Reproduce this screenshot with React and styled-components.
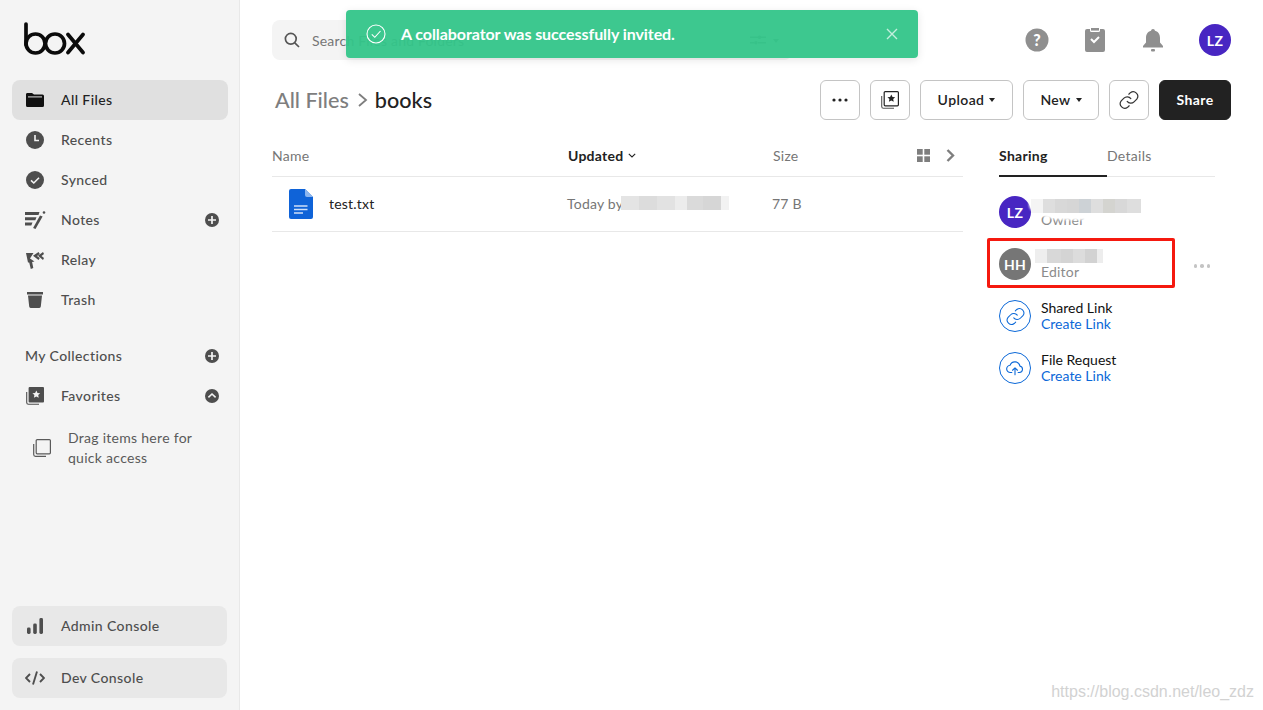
import React from "react";
import styled, { createGlobalStyle } from "styled-components";

const Global = createGlobalStyle`
  html, body { margin: 0; padding: 0; background: #fff; }
  body { font-family: Lato, "Open Sans", sans-serif; color: #222; overflow: hidden; }
  * { box-sizing: border-box; }
`;
const Page = styled.div`display: flex; width: 1263px; height: 710px; position: relative; overflow: hidden;`;
const Sidebar = styled.aside`
  width: 240px; flex: none; height: 100%; background: #f4f4f4; border-right: 1px solid #e8e8e8;
  padding: 22px 11px 12px 12px; display: flex; flex-direction: column;
`;
const Logo = styled.svg`width: 61px; height: 33px; margin-left: 12px; margin-bottom: 25px; flex: none; display: block;`;
const NavItem = styled.div`
  height: 40px; flex: none; border-radius: 8px; display: flex; align-items: center; padding: 0 9px 0 12px;
  background: ${p => (p.$active ? "#e0e0e0" : "transparent")};
  color: ${p => (p.$active ? "#222" : "#4e4e4e")};
  font-size: 14px; font-weight: 500; letter-spacing: .4px;
`;
const NavIcon = styled.span`width: 22px; height: 22px; margin-right: 15px; display: flex; align-items: center; justify-content: center; flex: none;
  svg { display: block; }`;
const NavLabel = styled.span`flex: 1; padding-bottom: 2px;`;
const SectionGap = styled.div`height: 16px; flex: none;`;
const SectionTitle = styled(NavItem)`padding-left: 13px;`;
const DragHint = styled.div`display: flex; align-items: center; padding: 12px 0 0 21px; color: #5a5a5a; font-size: 14px; line-height: 20px; letter-spacing: .28px;
  svg { margin-right: 17px; flex: none; }`;
const Spacer = styled.div`flex: 1;`;
const FootButton = styled(NavItem)`background: #e8e8e8; width: 215px; & + & { margin-top: 12px; }`;

const Main = styled.main`flex: 1; min-width: 0; padding: 20px 32px 0; display: flex; flex-direction: column;`;
const TopBar = styled.header`display: flex; align-items: center; height: 40px;`;
const Search = styled.div`width: 520px; height: 40px; border-radius: 8px; background: #f4f4f4; display: flex; align-items: center; padding: 0 12px; color: #767676; font-size: 14px; letter-spacing: .2px;
  svg { margin-right: 12px; flex: none; }`;
const SearchText = styled.span`flex: 1;`;
const Filter = styled.span`display: flex; align-items: center; gap: 7px; margin-right: 1px; svg { margin: 0; }`;
const TopIcons = styled.div`margin-left: auto; display: flex; align-items: center;`;
const TopIcon = styled.span`width: 24px; height: 24px; margin-right: 34px; display: flex; align-items: center; justify-content: center;`;
const Avatar = styled.span`
  width: 32px; height: 32px; border-radius: 50%; flex: none; background: ${p => p.$bg}; color: #fff;
  display: flex; align-items: center; justify-content: center; font-size: 14px; font-weight: 700; letter-spacing: .3px;
`;
const TitleRow = styled.div`display: flex; align-items: center; height: 40px; margin-top: 20px;`;
const Crumbs = styled.div`display: flex; align-items: center; font-size: 21.6px; font-weight: 500; padding: 0 0 0 3px; flex: 1;`;
const CrumbPrev = styled.span`color: #7e7e7e;`;
const CrumbNow = styled.span`color: #222;`;
const Actions = styled.div`display: flex; gap: 10px;`;
const Btn = styled.button`
  height: 40px; width: ${p => p.$w || 40}px; border-radius: 6px; background: #fff; border: 1px solid #c4c4c4; color: #222; font-family: inherit;
  font-size: 14px; font-weight: 600; letter-spacing: .4px; padding: 0 0 ${p => (p.$text ? "2px" : "0")}; display: flex; align-items: center; justify-content: center; gap: 5px;
`;
const DarkBtn = styled(Btn)`background: #222; border-color: #222; color: #fff; font-weight: 700;`;
const Caret = styled.span`width: 0; height: 0; margin-top: 2px; border-left: 3.5px solid transparent; border-right: 3.5px solid transparent; border-top: 4px solid ${p => p.$c || "#222"};`;

const Content = styled.div`display: flex; margin-top: 16px;`;
const Table = styled.section`width: 691px; flex: none;`;
const TableHead = styled.div`height: 41px; padding-bottom: 2px; border-bottom: 1px solid #e8e8e8; display: flex; align-items: center; font-size: 14px; color: #767676; letter-spacing: .25px;`;
const ColName = styled.span`width: 296px; flex: none;`;
const ColUpdated = styled.span`width: 205px; flex: none; display: flex; align-items: center; color: ${p => (p.$strong ? "#222" : "inherit")}; font-weight: ${p => (p.$strong ? 700 : 400)}; gap: 5px;`;
const ColSize = styled.span`flex: 1;`;
const HeadTools = styled.span`display: flex; align-items: center; gap: 16px; margin-right: 8px;`;
const Row = styled.div`height: 55px; padding-bottom: 2px; border-bottom: 1px solid #e8e8e8; display: flex; align-items: center; font-size: 14px; color: #767676; letter-spacing: .2px;`;
const FileCell = styled.span`width: 295px; flex: none; display: flex; align-items: center; padding-left: 17px; color: #222;
  svg { margin-right: 16px; margin-top: 2px; }`;
const UpdatedCell = styled.span`width: 205px; flex: none; display: flex; align-items: center;`;
const Pixels = styled.span`display: inline-flex; position: relative; height: 14px; flex: none; filter: blur(.6px); margin-left: ${p => p.$left || 0}px;`;
const Pixel = styled.span`width: ${p => p.$w}px; height: 100%; background: ${p => p.$c};`;

const Panel = styled.aside`width: 216px; margin-left: 36px; flex: none;`;
const Tabs = styled.div`height: 41px; display: flex; border-bottom: 1px solid #e8e8e8; font-size: 14px; letter-spacing: .3px;`;
const Tab = styled.span`
  width: 108px; display: flex; align-items: center; height: 41px; color: ${p => (p.$on ? "#222" : "#767676")}; font-weight: ${p => (p.$on ? 700 : 400)};
  border-bottom: ${p => (p.$on ? "2px solid #222" : "none")}; padding-bottom: ${p => (p.$on ? "0" : "2px")};
`;
const PanelList = styled.div`padding-top: 19px; display: flex; flex-direction: column; gap: 20px;`;
const Person = styled.div`display: flex; align-items: flex-start; height: 32px; position: relative;`;
const Highlight = styled.span`position: absolute; left: -12px; top: -10px; width: 188px; height: 50px; border: 3px solid #f5190f; border-radius: 2px;`;
const Smudge = styled.span`position: absolute; left: 30px; top: -13px; width: 98px; height: 37px; background: #fff; border-radius: 50% 40% 30% 40%; filter: blur(1px);`;
const PixelsRow = styled.span`position: absolute; left: 32px; top: 3px; display: flex;`;
const PersonText = styled.div`margin-left: 10px; display: flex; flex-direction: column; font-size: 14px; line-height: 16px; letter-spacing: .2px;`;
const Name = styled.span`height: 16px; display: flex; align-items: center;`;
const Role = styled.span`color: #8b8b8b;`;
const More = styled.span`position: absolute; right: 5px; top: 16px; display: flex; gap: 3px;`;
const Dot = styled.i`width: 3.500px; height: 3.500px; border-radius: 50%; background: #c4c4c4;`;
const LinkTitle = styled.span`color: #111; letter-spacing: 0;`;
const LinkAction = styled.span`color: #0b68d8; letter-spacing: 0;`;
const IconRing = styled.span`width: 32px; height: 32px; border-radius: 50%; border: 1px solid #0b68d8; display: flex; align-items: center; justify-content: center; flex: none;`;

const Toast = styled.div`
  position: absolute; left: 346px; top: 10px; width: 572px; height: 48px; border-radius: 4px; background: rgba(51, 197, 137, .95);
  box-shadow: 0 2px 8px rgba(0,0,0,.1); color: #fff; display: flex; align-items: center; padding: 0 20px;
  font-size: 16px; font-weight: 700; letter-spacing: -.07px;
`;
const ToastText = styled.span`flex: 1; margin-left: 15px; padding-bottom: 2px;`;
const Mark = styled.span`position: absolute; right: 9px; bottom: 8px; color: #d2d2d2; font-family: "Liberation Sans", sans-serif; font-size: 16px; line-height: 20px;`;

const LogoBox = () => (
  <Logo viewBox="0 0 61 33" fill="none" stroke="#0b0b0b" strokeWidth="3.700" strokeLinecap="round">
    <path d="M2 2v20.500" />
    <circle cx="11.500" cy="21.500" r="9.500" />
    <circle cx="31" cy="21.500" r="9.500" />
    <path d="M44 12.500 59 30.500M59 12.500 44 30.500" />
  </Logo>
);
const Folder = () => (<svg width="18" height="14" viewBox="0 0 18 14"><path fill="#111" d="M1 0h5l2 1.500h8.500A1.500 1.500 0 0 1 18 3v9.500a1.500 1.500 0 0 1-1.500 1.500h-15A1.500 1.500 0 0 1 0 12.500v-11A1.500 1.500 0 0 1 1 0z"/><path fill="#e0e0e0" d="M2 3.400h14v1H2z"/></svg>);
const Clock = () => (<svg width="18" height="18" viewBox="0 0 18 18"><circle cx="9" cy="9" r="9" fill="#4e4e4e"/><path d="M9 4v5.500h4" fill="none" stroke="#f4f4f4" strokeWidth="1.600"/></svg>);
const Check = () => (<svg width="18" height="18" viewBox="0 0 18 18"><circle cx="9" cy="9" r="9" fill="#4e4e4e"/><path d="M5 9.300l2.800 2.700L13 6.800" fill="none" stroke="#f4f4f4" strokeWidth="1.600"/></svg>);
const Notes = () => (<svg width="21" height="18" viewBox="0 0 21 18" fill="#4e4e4e"><path d="M0 1h14.500l-1 3H0zM0 6.200h11.500l-1.200 3H0zM0 11.400h7.500l-1.200 3H0z"/><path d="M15 4.500l2.600 1L10.500 18l-2.400-1z"/><circle cx="19" cy="1.500" r="1.300"/></svg>);
const Relay = () => (<svg width="18" height="17" viewBox="0 0 18 17" fill="#4e4e4e"><path d="M0 1h7.500L4 6.500l4.500 3-2.400.6L7.300 16l-2.500 1L3.200 10.500 2 10.500z"/><path d="M7 3.800 12.500 0l1.300 2-2.800 1.900 2.800 2-1.300 2zM12 3.800 17 0l1 2-2.500 1.900L18 5.900l-1 2z"/></svg>);
const Trash = () => (<svg width="16" height="16" viewBox="0 0 16 16" fill="#4e4e4e"><path d="M0 0h16v2.600H0zM1 3.600h14l-1.200 11a1.500 1.500 0 0 1-1.500 1.400H3.700a1.500 1.500 0 0 1-1.500-1.400z"/></svg>);
const PlusDot = () => (<svg width="14" height="14" viewBox="0 0 14 14"><circle cx="7" cy="7" r="7" fill="#4e4e4e"/><path d="M7 3v8M3 7h8" stroke="#f4f4f4" strokeWidth="1.700"/></svg>);
const UpDot = () => (<svg width="14" height="14" viewBox="0 0 14 14"><circle cx="7" cy="7" r="7" fill="#4e4e4e"/><path d="M3.400 8.400 7 5l3.600 3.400" fill="none" stroke="#f4f4f4" strokeWidth="1.600"/></svg>);
const Fav = () => (<svg width="18" height="18" viewBox="0 0 18 18"><path d="M.7 5v10.500A1.800 1.800 0 0 0 2.500 17.300H13" fill="none" stroke="#4e4e4e" strokeWidth="1.100"/><rect x="2.600" y="0" width="15.400" height="15.400" rx="1" fill="#4e4e4e"/><path d="M10.300 3.400l1.200 2.500 2.700.3-2 1.900.5 2.700-2.400-1.300-2.400 1.300.5-2.700-2-1.900 2.700-.3z" fill="#f4f4f4"/></svg>);
const FavLine = () => (<svg width="18" height="18" viewBox="0 0 18 18"><path d="M.7 5v10.500A1.800 1.800 0 0 0 2.500 17.300H13" fill="none" stroke="#555" strokeWidth="1.100"/><rect x="3.200" y=".6" width="14.200" height="14.200" rx="1" fill="#fff" stroke="#222" strokeWidth="1.200"/><path d="M10.300 3.400l1.200 2.500 2.700.3-2 1.900.5 2.700-2.400-1.300-2.400 1.300.5-2.700-2-1.900 2.700-.3z" fill="#222"/></svg>);
const Stack = () => (<svg width="18" height="18" viewBox="0 0 18 18" fill="none" stroke="#5a5a5a" strokeWidth="1.200"><path d="M.7 5v10.500A1.800 1.800 0 0 0 2.500 17.300H13"/><rect x="3.200" y=".6" width="14.200" height="14.200" rx="1"/></svg>);
const Bars = () => (<svg width="16" height="16" viewBox="0 0 16 16" fill="#4e4e4e"><rect x="0" y="9.500" width="3.600" height="6.500" rx="1.400"/><rect x="6.200" y="5.500" width="3.600" height="10.500" rx="1.400"/><rect x="12.400" y="0" width="3.600" height="16" rx="1.400"/></svg>);
const Code = () => (<svg width="20" height="14" viewBox="0 0 20 14" fill="none" stroke="#4e4e4e" strokeWidth="1.900"><path d="M5 3 1 7l4 4M15 3l4 4-4 4M12 .5 8 13.500"/></svg>);
const Lens = () => (<svg width="16" height="16" viewBox="0 0 16 16" fill="none" stroke="#555" strokeWidth="1.700"><circle cx="6.800" cy="6.800" r="5.400"/><path d="M10.800 10.800 15 15"/></svg>);
const Help = () => (<svg width="24" height="24" viewBox="0 0 24 24"><circle cx="12" cy="12" r="11.500" fill="#8f8f8f"/><text x="12" y="17.500" textAnchor="middle" fontFamily="Lato, sans-serif" fontWeight="900" fontSize="16" fill="#fff">?</text></svg>);
const Clip = () => (<svg width="20" height="24" viewBox="0 0 20 24"><path fill="#8f8f8f" d="M2 1h3v1.500A1.500 1.500 0 0 0 6.500 4h7A1.500 1.500 0 0 0 15 2.500V1h3a2 2 0 0 1 2 2v19a2 2 0 0 1-2 2H2a2 2 0 0 1-2-2V3a2 2 0 0 1 2-2z"/><path d="M6 0h8v2.600H6z" fill="#8f8f8f"/><path d="M6 11l3 3 5-5" fill="none" stroke="#fff" strokeWidth="2"/></svg>);
const Bell = () => (<svg width="20" height="23" viewBox="0 0 20 23" fill="#8f8f8f"><path d="M10 0a2 2 0 0 1 2 1.800C15.500 2.800 17 5.800 17 9v4.500l3 3.500v1.500H0V17l3-3.500V9c0-3.200 1.500-6.200 5-7.200A2 2 0 0 1 10 0z"/><rect x="8" y="20" width="4" height="2.500" rx="1"/></svg>);
const Dots = () => (<svg width="16" height="4" viewBox="0 0 16 4" fill="#222"><circle cx="2" cy="2" r="1.600"/><circle cx="8" cy="2" r="1.600"/><circle cx="14" cy="2" r="1.600"/></svg>);
const LinkIcon = ({ c = "#333", s = 22, w = 1.300 }) => (<svg width={s} height={s} viewBox="0 0 24 24" fill="none" stroke={c} strokeWidth={w} strokeLinecap="round"><path d="M10 13.500a5 5 0 0 0 7.500.5l3-3a5 5 0 0 0-7-7l-1.700 1.700"/><path d="M14 10.500a5 5 0 0 0-7.500-.5l-3 3a5 5 0 0 0 7 7l1.700-1.700"/></svg>);
const Cloud = () => (<svg width="18" height="18" viewBox="0 0 20 20" fill="none" stroke="#0b68d8" strokeWidth="1.200" strokeLinecap="round" strokeLinejoin="round"><path d="M6.500 15H5A4 4 0 0 1 4.500 7a5.700 5.700 0 0 1 11 .9A3.600 3.600 0 0 1 15 15h-1.500"/><path d="M10 17.500V10M7.300 12.500 10 9.800l2.700 2.700"/></svg>);
const Grid = () => (<svg width="13" height="13" viewBox="0 0 13 13" fill="#7e7e7e"><rect width="5.700" height="5.700"/><rect x="7.300" width="5.700" height="5.700"/><rect y="7.300" width="5.700" height="5.700"/><rect x="7.300" y="7.300" width="5.700" height="5.700"/></svg>);
const Chev = () => (<svg width="9" height="13" viewBox="0 0 9 13" fill="none" stroke="#7e7e7e" strokeWidth="2.400"><path d="M1.500 1 7 6.500 1.500 12"/></svg>);
const Down = () => (<svg width="8" height="5" viewBox="0 0 8 5" fill="none" stroke="#222" strokeWidth="1.100"><path d="M.8.800 4 4 7.200.800"/></svg>);
const Doc = () => (<svg width="24" height="30" viewBox="0 0 24 30"><path fill="#0f63d8" d="M2 0h14l8 8v20a2 2 0 0 1-2 2H2a2 2 0 0 1-2-2V2a2 2 0 0 1 2-2z"/><path fill="#8cb5ee" d="M16 0l8 8h-6a2 2 0 0 1-2-2z"/><path stroke="#cfe0f8" strokeWidth="1.300" d="M5 17h13.500M5 20.500h13.500M5 24h9"/></svg>);
const Sliders = () => (<svg width="16" height="10" viewBox="0 0 16 10" fill="#8a8a8a"><path d="M0 1.500h8v1.500H0zM11 1.500h5v1.500h-5zM0 7h4v1.500H0zM8 7h8v1.500H8z"/><circle cx="9.500" cy="2.200" r="1.800"/><circle cx="5.800" cy="7.800" r="1.800"/></svg>);
const ToastCheck = () => (<svg width="20" height="20" viewBox="0 0 20 20" fill="none" stroke="#fff" strokeWidth="1.100"><circle cx="10" cy="10" r="9"/><path d="M5.800 10.300l3 3L14.500 7"/></svg>);
const ToastClose = () => (<svg width="12" height="12" viewBox="0 0 12 12" fill="none" stroke="#c4eedd" strokeWidth="1.400"><path d="M1 1l10 10M11 1 1 11"/></svg>);

const px = (list) => list.map(([w, c], i) => <Pixel key={i} $w={w} $c={c} />);

export default function App() {
  return (
    <Page>
      <Global />
      <Sidebar>
        <LogoBox />
        <NavItem $active><NavIcon><Folder /></NavIcon><NavLabel>All Files</NavLabel></NavItem>
        <NavItem><NavIcon><Clock /></NavIcon><NavLabel>Recents</NavLabel></NavItem>
        <NavItem><NavIcon><Check /></NavIcon><NavLabel>Synced</NavLabel></NavItem>
        <NavItem><NavIcon><Notes /></NavIcon><NavLabel>Notes</NavLabel><PlusDot /></NavItem>
        <NavItem><NavIcon><Relay /></NavIcon><NavLabel>Relay</NavLabel></NavItem>
        <NavItem><NavIcon><Trash /></NavIcon><NavLabel>Trash</NavLabel></NavItem>
        <SectionGap />
        <SectionTitle><NavLabel>My Collections</NavLabel><PlusDot /></SectionTitle>
        <NavItem><NavIcon><Fav /></NavIcon><NavLabel>Favorites</NavLabel><UpDot /></NavItem>
        <DragHint><Stack /><span>Drag items here for<br />quick access</span></DragHint>
        <Spacer />
        <FootButton><NavIcon><Bars /></NavIcon><NavLabel>Admin Console</NavLabel></FootButton>
        <FootButton><NavIcon><Code /></NavIcon><NavLabel>Dev Console</NavLabel></FootButton>
      </Sidebar>
      <Main>
        <TopBar>
          <Search><Lens /><SearchText>Search Files and Folders</SearchText><Filter><Sliders /><Caret $c="#8a8a8a" /></Filter></Search>
          <TopIcons>
            <TopIcon><Help /></TopIcon>
            <TopIcon><Clip /></TopIcon>
            <TopIcon><Bell /></TopIcon>
            <Avatar $bg="#4826c2">LZ</Avatar>
          </TopIcons>
        </TopBar>
        <TitleRow>
          <Crumbs>
            <CrumbPrev>All Files</CrumbPrev>
            <svg width="26" height="14" viewBox="0 0 26 14" fill="none" stroke="#7e7e7e" strokeWidth="1.800"><path d="M10 1 17 7 10 13" /></svg>
            <CrumbNow>books</CrumbNow>
          </Crumbs>
          <Actions>
            <Btn><Dots /></Btn>
            <Btn><FavLine /></Btn>
            <Btn $w={93} $text>Upload<Caret /></Btn>
            <Btn $w={76} $text>New<Caret /></Btn>
            <Btn><LinkIcon /></Btn>
            <DarkBtn $w={72} $text>Share</DarkBtn>
          </Actions>
        </TitleRow>
        <Content>
          <Table>
            <TableHead>
              <ColName>Name</ColName>
              <ColUpdated $strong>Updated<Down /></ColUpdated>
              <ColSize>Size</ColSize>
              <HeadTools><Grid /><Chev /></HeadTools>
            </TableHead>
            <Row>
              <FileCell><Doc />test.txt</FileCell>
              <UpdatedCell>Today by
                <Pixels $left={-2}>{px([[18, "#e4e4e4"], [18, "#dcdcdc"], [18, "#e2e2e2"], [12, "#ececec"], [16, "#dadada"], [18, "#d6d6d6"], [8, "#f2f2f2"]])}</Pixels>
              </UpdatedCell>
              <span>77 B</span>
            </Row>
          </Table>
          <Panel>
            <Tabs><Tab $on>Sharing</Tab><Tab>Details</Tab></Tabs>
            <PanelList>
              <Person>
                <Avatar $bg="#4826c2">LZ</Avatar>
                <PersonText>
                  <Name />
                  <Role>Owner</Role>
                </PersonText>
                <Smudge />
                <PixelsRow>
                  <Pixels>{px([[12, "#f4f4f4"], [12, "#dedede"], [12, "#d8d8d8"], [12, "#d6d6d6"], [12, "#cdd2d6"], [12, "#dedede"], [12, "#d4d4d0"], [12, "#d8d8d8"], [14, "#dedede"]])}</Pixels>
                </PixelsRow>
              </Person>
              <Person>
                <Avatar $bg="#767676">HH</Avatar>
                <PersonText>
                  <Name>
                    <Pixels $left={-6}>{px([[12, "#eeeeee"], [14, "#d8d8d8"], [12, "#d4d4d4"], [12, "#dcdcdc"], [12, "#d2d2d2"], [6, "#ededed"]])}</Pixels>
                  </Name>
                  <Role>Editor</Role>
                </PersonText>
                <Highlight />
                <More><Dot /><Dot /><Dot /></More>
              </Person>
              <Person>
                <IconRing><LinkIcon c="#0b68d8" s={21} w={1.200} /></IconRing>
                <PersonText><LinkTitle>Shared Link</LinkTitle><LinkAction>Create Link</LinkAction></PersonText>
              </Person>
              <Person>
                <IconRing><Cloud /></IconRing>
                <PersonText><LinkTitle>File Request</LinkTitle><LinkAction>Create Link</LinkAction></PersonText>
              </Person>
            </PanelList>
          </Panel>
        </Content>
      </Main>
      <Toast><ToastCheck /><ToastText>A collaborator was successfully invited.</ToastText><ToastClose /></Toast>
      <Mark>https://blog.csdn.net/leo_zdz</Mark>
    </Page>
  );
}
